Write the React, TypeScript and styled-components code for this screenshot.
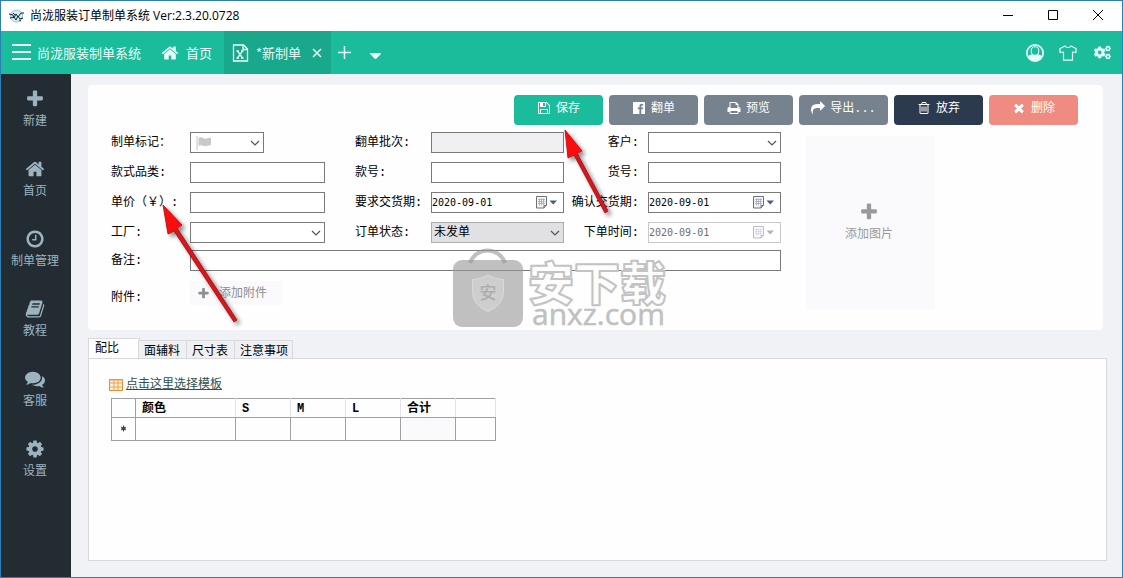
import React from "react";
import styled, { createGlobalStyle } from "styled-components";
import { FaCogs } from "react-icons/fa";

const Global = createGlobalStyle`
  *, *::before, *::after { box-sizing: border-box; }
  body {
    margin: 0;
    font: 12px/16px "Liberation Mono", "Noto Sans CJK SC", monospace;
    color: #000;
  }
  button, input, select { font: inherit; color: inherit; }
  button { cursor: pointer; }
`;

const PATHS = {
  plus: "M1600 736v192q0 40-28 68t-68 28h-416v416q0 40-28 68t-68 28h-192q-40 0-68-28t-28-68v-416h-416q-40 0-68-28t-28-68v-192q0-40 28-68t68-28h416v-416q0-40 28-68t68-28h192q40 0 68 28t28 68v416h416q40 0 68 28t28 68z",
  home: "M1472 992v480q0 26-19 45t-45 19h-384v-384h-256v384h-384q-26 0-45-19t-19-45v-480q0-1 .5-3t.5-3l575-474 575 474q1 2 1 6zm223-69l-62 74q-8 9-21 11h-3q-13 0-21-7l-692-577-692 577q-12 8-24 7-13-2-21-11l-62-74q-8-10-7-23.500t11-21.500l719-599q32-26 76-26t76 26l244 204v-195q0-14 9-23t23-9h192q14 0 23 9t9 23v408l219 182q10 8 11 21.500t-7 23.500z",
  clock: "M1024 544v448q0 14-9 23t-23 9h-320q-14 0-23-9t-9-23v-64q0-14 9-23t23-9h224v-352q0-14 9-23t23-9h64q14 0 23 9t9 23zm416 352q0-148-73-273t-198-198-273-73-273 73-198 198-73 273 73 273 198 198 273 73 273-73 198-198 73-273zm224 0q0 209-103 385.500t-279.500 279.500-385.500 103-385.500-103-279.500-279.500-103-385.500 103-385.500 279.500-279.500 385.500-103 385.500 103 279.500 279.500 103 385.500z",
  book: "M1703 478q40 57 18 129l-275 906q-19 64-76.500 107.500t-122.500 43.500h-923q-77 0-148.500-53.500t-99.500-131.500q-24-67-2-127 0-4 3-27t4-37q1-8-3-21.500t-3-19.500q2-11 8-21t16.500-23.500 16.500-23.500q23-38 45-91.500t30-91.500q3-10 .5-30t-.5-28q3-11 17-28t17-23q21-36 42-92t25-90q1-9-2.500-32t.5-28q4-13 22-30.500t22-22.500q19-26 42.500-84.500t27.500-96.500q1-8-3-25.500t-2-26.500q2-8 9-18t18-23 17-21q8-12 16.500-30.500t15-35 16-36 19.500-32 26.500-23.500 36-11.500 47.500 5.500l-1 3q38-9 51-9h761q74 0 114 56t18 130l-274 906q-36 119-71.500 153.500t-128.500 34.500h-869q-27 0-38 15-11 16-1 43 24 70 144 70h923q29 0 56-15.500t35-41.500l300-987q7-22 5-57 38 15 59 43zm-1064 2q-4 13 2 22.500t20 9.500h608q13 0 25.500-9.500t16.500-22.500l21-64q4-13-2-22.500t-20-9.500h-608q-13 0-25.500 9.500t-16.500 22.500zm-83 256q-4 13 2 22.500t20 9.500h608q13 0 25.500-9.500t16.500-22.500l21-64q4-13-2-22.500t-20-9.500h-608q-13 0-25.500 9.500t-16.500 22.500z",
  comments: "M1408 768q0 139-94 257t-256.500 186.500-353.500 68.500q-86 0-176-16-124 88-278 128-36 9-86 16h-3q-11 0-20.500-8t-11.500-21q-1-3-1-6.500t.5-6.500 2-6l2.500-5 3.500-5.500 4-5 4.500-5 4-4.500q5-6 23-25t26-29.500 22.500-29 25-38.500 20.500-44q-124-72-195-177t-71-224q0-139 94-257t256.500-186.500 353.500-68.500 353.500 68.500 256.500 186.500 94 257zm384 256q0 120-71 224.500t-195 176.500q10 24 20.500 44t25 38.500 22.500 29 26 29.500 23 25q1 1 4 4.500t4.500 5 4 5 3.500 5.500l2.500 5 2 6 .5 6.500-1 6.500q-3 14-13 22t-22 7q-50-7-86-16-154-40-278-128-90 16-176 16-271 0-472-132 58 4 88 4 161 0 309-45t264-129q125-92 192-212t67-254q0-77-23-152 129 71 204 178t75 230z",
  cog: "M1152 896q0-106-75-181t-181-75-181 75-75 181 75 181 181 75 181-75 75-181zm512-109v222q0 12-8 23t-20 13l-185 28q-19 54-39 91 35 50 107 138 10 12 10 25t-9 23q-27 37-99 108t-94 71q-12 0-26-9l-138-108q-44 23-91 38-16 136-29 186-7 28-36 28h-222q-14 0-24.500-8.500t-11.500-21.500l-28-184q-49-16-90-37l-141 107q-10 9-25 9-14 0-25-11-126-114-165-168-7-10-7-23 0-12 8-23 15-21 51-66.500t54-70.500q-27-50-41-99l-183-27q-13-2-21-12.500t-8-23.500v-222q0-12 8-23t19-13l186-28q14-46 39-92-40-57-107-138-10-12-10-24 0-10 9-23 26-36 98.500-107.500t94.500-71.500q13 0 26 10l138 107q44-23 91-38 16-136 29-186 7-28 36-28h222q14 0 24.500 8.500t11.500 21.500l28 184q49 16 90 37l142-107q9-9 24-9 13 0 25 10 129 119 165 170 7 8 7 22 0 12-8 23-15 21-51 66.500t-54 70.500q26 50 41 98l183 28q13 2 21 12.500t8 23.500z",
  save: "M512 1536h768v-384h-768v384zm896 0h128v-896q0-14-10-38.500t-20-34.500l-281-281q-10-10-34-20t-39-10v416q0 40-28 68t-68 28h-576q-40 0-68-28t-28-68v-416h-128v1280h128v-416q0-40 28-68t68-28h832q40 0 68 28t28 68v416zm-384-928v-320q0-13-9.500-22.500t-22.500-9.500h-192q-13 0-22.500 9.500t-9.500 22.500v320q0 13 9.500 22.500t22.500 9.500h192q13 0 22.500-9.500t9.500-22.500zm640 32v928q0 40-28 68t-68 28h-1344q-40 0-68-28t-28-68v-1344q0-40 28-68t68-28h928q40 0 88 20t76 48l280 280q28 28 48 76t20 88z",
  facebook: "M1579 128q35 0 60 25t25 60v1366q0 35-25 60t-60 25h-391v-595h199l30-232h-229v-148q0-56 23.500-84t91.500-28l122-1v-207q-63-9-178-9-136 0-217.500 80t-81.500 226v171h-200v232h200v595h-735q-35 0-60-25t-25-60v-1366q0-35 25-60t60-25h1366z",
  print: "M448 1536h896v-256h-896v256zm0-640h896v-384h-160q-40 0-68-28t-28-68v-160h-640v640zm1152 64q0-26-19-45t-45-19-45 19-19 45 19 45 45 19 45-19 19-45zm128 0v416q0 13-9.500 22.500t-22.500 9.500h-224v160q0 40-28 68t-68 28h-960q-40 0-68-28t-28-68v-160h-224q-13 0-22.500-9.500t-9.500-22.500v-416q0-79 56.500-135.500t135.500-56.500h64v-544q0-40 28-68t68-28h672q40 0 88 20t76 48l152 152q28 28 48 76t20 88v256h64q79 0 135.500 56.500t56.500 135.500z",
  share: "M1792 640q0 26-19 45l-512 512q-19 19-45 19t-45-19-19-45v-256h-224q-98 0-175.500 6t-154 21.500-133 42.500-105.500 69.500-80 101-48.500 138.500-17.500 181q0 55 5 123 0 6 2.500 23.500t2.500 26.500q0 15-8.500 25t-23.500 10q-16 0-28-17-7-9-13-22t-13.500-30-10.500-24q-127-285-127-451 0-199 53-333 162-403 875-403h224v-256q0-26 19-45t45-19 45 19l512 512q19 19 19 45z",
  trash: "M704 736v576q0 14-9 23t-23 9h-64q-14 0-23-9t-9-23v-576q0-14 9-23t23-9h64q14 0 23 9t9 23zm256 0v576q0 14-9 23t-23 9h-64q-14 0-23-9t-9-23v-576q0-14 9-23t23-9h64q14 0 23 9t9 23zm256 0v576q0 14-9 23t-23 9h-64q-14 0-23-9t-9-23v-576q0-14 9-23t23-9h64q14 0 23 9t9 23zm128 724v-948h-896v948q0 22 7 40.500t14.500 27 10.500 8.500h832q3 0 10.500-8.500t14.500-27 7-40.500zm-672-1076h448l-48-117q-7-9-17-11h-317q-10 2-17 11zm928 32v64q0 14-9 23t-23 9h-96v948q0 83-47 143.500t-113 60.500h-832q-66 0-113-58.500t-47-141.500v-952h-96q-14 0-23-9t-9-23v-64q0-14 9-23t23-9h309l70-167q15-37 54-63t79-26h320q40 0 79 26t54 63l70 167h309q14 0 23 9t9 23z",
  times: "M1490 1322q0 40-28 68l-136 136q-28 28-68 28t-68-28l-294-294-294 294q-28 28-68 28t-68-28l-136-136q-28-28-28-68t28-68l294-294-294-294q-28-28-28-68t28-68l136-136q28-28 68-28t68 28l294 294 294-294q28-28 68-28t68 28l136 136q28 28 28 68t-28 68l-294 294 294 294q28 28 28 68z",
};
type IconName = keyof typeof PATHS;

const Icon = ({ name, size }: { name: IconName; size: number }) => (
  <svg width={size} height={size} viewBox="0 0 1792 1792" fill="currentColor" aria-hidden="true">
    <path d={PATHS[name]} />
  </svg>
);

const Window = styled.div`
  position: relative;
  display: flex;
  flex-direction: column;
  min-height: 100vh;
  border: 1px solid #2b7fb8;
  background: #f0f2f6;
  overflow: hidden;
`;

const TitleBar = styled.header`
  display: flex;
  align-items: center;
  height: 30px;
  padding-left: 8px;
  background: #fff;
  font-family: "Open Sans", "Noto Sans CJK SC", sans-serif;
`;
const WindowTitle = styled.h1`
  flex: 1;
  margin: 0 0 0 6px;
  font-size: 12px;
  font-weight: 400;
`;
const CaptionButton = styled.button`
  display: grid;
  place-items: center;
  width: 45px;
  height: 30px;
  padding: 0 3px 2px 0;
  border: 0;
  background: none;
`;

const AppBar = styled.nav`
  display: flex;
  align-items: center;
  height: 43px;
  padding-left: 10px;
  background: #1abc9c;
  color: #e9fffa;
  font: 13px/18px "Noto Sans CJK SC", sans-serif;
`;
const BarButton = styled.button<{ $width?: number }>`
  display: flex;
  align-items: center;
  justify-content: center;
  width: ${(p) => (p.$width ? `${p.$width}px` : "auto")};
  height: 43px;
  padding: 0;
  border: 0;
  background: none;
`;
const Brand = styled.span`
  margin-left: 5px;
`;
const DocTab = styled.div<{ $active?: boolean }>`
  display: flex;
  align-items: center;
  gap: 8px;
  height: 43px;
  padding: ${(p) => (p.$active ? "0 6px 0 8px" : "0 12px 0 20px")};
  background: ${(p) => (p.$active ? "#1aa88c" : "transparent")};
`;
const TabLink = styled.a`
  display: flex;
  align-items: center;
  gap: 7px;
  color: inherit;
  text-decoration: none;
`;
const Tools = styled.div`
  display: flex;
  margin-left: auto;
  padding-right: 1px;
`;

const Body = styled.div`
  display: flex;
  flex: 1;
`;
const Sidebar = styled.nav`
  flex: none;
  width: 70px;
  padding-right: 2px;
  background: #232c33;
`;
const SideItem = styled.a`
  display: flex;
  flex-direction: column;
  align-items: center;
  justify-content: center;
  gap: 5px;
  height: 70px;
  color: #9db4c0;
  text-decoration: none;
`;

const Main = styled.main`
  display: flex;
  flex: 1;
  flex-direction: column;
  gap: 8px;
  min-width: 0;
  padding: 11px 15px 16px 17px;
`;
const OrderCard = styled.section`
  margin-right: 4px;
  padding: 10px 25px 21px 23px;
  border-radius: 4px;
  background: #fefefe;
`;
const Actions = styled.div`
  display: flex;
  justify-content: flex-end;
  gap: 6px;
`;
const ActionButton = styled.button<{ $color: string }>`
  display: flex;
  align-items: center;
  justify-content: center;
  gap: 5px;
  width: 89px;
  height: 30px;
  padding: 0 0 2px;
  border: 0;
  border-radius: 4px;
  background: ${(p) => p.$color};
  color: #fff;
  svg { margin-bottom: 2px; }
`;

const FormRow = styled.div`
  display: flex;
  align-items: flex-start;
  gap: 25px;
  padding-top: 7px;
`;
const Fields = styled.form`
  display: grid;
  grid-template-columns: 79px 135px 30px 76px 133px 84px 133px;
  grid-template-rows: repeat(3, 30px) 28px 31px 26px;
  align-items: start;
`;
const FieldLabel = styled.label<{ $end?: boolean; $low?: boolean; $col?: number }>`
  grid-column: ${(p) => p.$col ?? "auto"};
  align-self: ${(p) => (p.$low ? "end" : "start")};
  padding-right: ${(p) => (p.$end ? "9px" : "0")};
  line-height: ${(p) => (p.$low ? "18px" : "22px")};
  text-align: ${(p) => (p.$end ? "right" : "left")};
  white-space: nowrap;
`;
const TextBox = styled.input<{ $wide?: boolean }>`
  grid-column: ${(p) => (p.$wide ? "2 / -1" : "auto")};
  width: 100%;
  height: 21px;
  padding: 0 2px;
  border: 1px solid #7a7a7a;
  border-radius: 0;
  background: #fff;
  &:disabled { background: #f0eff1; }
`;
const Control = styled.div<{ $width?: number }>`
  position: relative;
  width: ${(p) => (p.$width ? `${p.$width}px` : "100%")};
`;
const SelectBox = styled.select<{ $grey?: boolean }>`
  display: block;
  width: 100%;
  height: 21px;
  padding: 1px 2px 0;
  border: 1px solid ${(p) => (p.$grey ? "#adadad" : "#7a7a7a")};
  border-radius: 0;
  background: ${(p) => (p.$grey ? "#e1e0e2" : "#fff")};
  line-height: 18px;
  appearance: none;
`;
const DateBox = styled.input`
  display: block;
  width: 100%;
  height: 21px;
  padding: 0 0 1px;
  border: 1px solid #7a7a7a;
  border-radius: 0;
  background: #fff;
  font: 10px/18px "DejaVu Sans Mono", monospace;
  &:disabled { border-color: #c8c8c8; color: #6d6d6d; }
`;
const EndMark = styled.span<{ $faded?: boolean }>`
  position: absolute;
  top: 0;
  right: 4px;
  display: flex;
  align-items: center;
  height: 21px;
  opacity: ${(p) => (p.$faded ? 0.45 : 1)};
  pointer-events: none;
`;
const DateMark = styled(EndMark)`
  right: 6px;
`;
const StartMark = styled(EndMark)`
  right: auto;
  left: 6px;
`;
const AttachButton = styled.button`
  display: flex;
  align-items: center;
  gap: 9px;
  width: 93px;
  height: 24px;
  padding: 2px 0 0 7px;
  border: 0;
  background: #faf9fc;
  color: #8f8f8f;
  svg { margin-bottom: 2px; }
`;
const PictureButton = styled.button`
  display: flex;
  flex-direction: column;
  align-items: center;
  justify-content: center;
  gap: 5px;
  width: 129px;
  height: 173px;
  margin-top: 4px;
  padding: 0 3px 1px 0;
  border: 0;
  background: #faf9fc;
  color: #999;
`;

const Details = styled.section`
  display: flex;
  flex: 1;
  flex-direction: column;
`;
const TabList = styled.div`
  display: flex;
  align-items: flex-end;
  height: 21px;
  margin-bottom: -1px;
`;
const DetailTab = styled.button<{ $active?: boolean }>`
  height: ${(p) => (p.$active ? "21px" : "19px")};
  padding: ${(p) => (p.$active ? "1px 20px 0 6px" : "3px 6px 0 5px")};
  margin-right: ${(p) => (p.$active ? "-2px" : "0")};
  border: 1px solid #d9d9dc;
  border-right-width: ${(p) => (p.$active ? "1px" : "0")};
  border-bottom-color: ${(p) => (p.$active ? "#fefefe" : "#d9d9dc")};
  background: ${(p) => (p.$active ? "#fefefe" : "#f0eff2")};
  line-height: 16px;
  &:last-child { border-right-width: 1px; padding-right: 4px; }
`;
const DetailPane = styled.div`
  flex: 1;
  padding: 18px 20px;
  border: 1px solid #d9d9dc;
  background: #fefefe;
`;
const TemplateLink = styled.a`
  display: inline-flex;
  align-items: center;
  gap: 3px;
  color: #2f4f4f;
`;
const SizeTable = styled.table`
  width: 385px;
  margin: 2px 0 0 2px;
  border-collapse: collapse;
  table-layout: fixed;
  th, td { padding: 0 6px; border: 1px solid #a0a0a0; }
  th {
    height: 19px;
    padding-top: 1px;
    border-right-color: #e2e2e2;
    border-left-color: #e2e2e2;
    text-align: left;
    line-height: 16px;
  }
  td { height: 23px; }
  th:first-child, td:first-child { border-left-color: #a0a0a0; }
  th:first-child { border-right-color: #a0a0a0; }
  td:first-child { padding: 0; text-align: center; }
  td:nth-child(6) { background: #faf9fc; }
`;
const Col = styled.col<{ $width: number }>`
  width: ${(p) => p.$width}px;
`;

const Watermark = styled.svg`
  position: absolute;
  top: 245px;
  left: 451px;
  color: rgba(150, 150, 150, 0.6);
  pointer-events: none;
`;
const Arrow = styled.svg<{ $left: number; $top: number }>`
  position: absolute;
  top: ${(p) => p.$top}px;
  left: ${(p) => p.$left}px;
  filter: drop-shadow(3px 3px 2px rgba(0, 0, 0, 0.45));
  pointer-events: none;
`;

const Chevron = () => (
  <svg width="10" height="6" viewBox="0 0 10 6" fill="none" stroke="#555" strokeWidth="1.2" aria-hidden="true">
    <path d="M1 1l4 4 4-4" />
  </svg>
);
const CalendarMark = () => (
  <svg width="22" height="13" viewBox="0 0 22 13" aria-hidden="true">
    <path d="M.5 .5h10v8.500l-2.500 3H.5z" fill="#f4f5f8" stroke="#707070" />
    <path d="M2 3.500h7M2 5.500h7M2 7.500h7M3.500 2.500v7M5.500 2.500v7M7.500 2.500v7" stroke="#9aa3b3" strokeWidth=".7" />
    <path d="M8 12V9.500h2.500" fill="none" stroke="#707070" />
    <path d="M13.500 4.500h7.500L17.200 8.500z" fill="#44617f" />
  </svg>
);

const DateField = ({ id, disabled }: { id: string; disabled?: boolean }) => (
  <Control>
    <DateBox id={id} type="text" defaultValue="2020-09-01" disabled={disabled} />
    <DateMark $faded={disabled}><CalendarMark /></DateMark>
  </Control>
);

const sideItems: { icon: IconName; label: string }[] = [
  { icon: "plus", label: "新建" },
  { icon: "home", label: "首页" },
  { icon: "clock", label: "制单管理" },
  { icon: "book", label: "教程" },
  { icon: "comments", label: "客服" },
  { icon: "cog", label: "设置" },
];
const actions: { icon: IconName; label: string; color: string }[] = [
  { icon: "save", label: "保存", color: "#1abc9c" },
  { icon: "facebook", label: "翻单", color: "#76838f" },
  { icon: "print", label: "预览", color: "#76838f" },
  { icon: "share", label: "导出...", color: "#76838f" },
  { icon: "trash", label: "放弃", color: "#2c3a50" },
  { icon: "times", label: "删除", color: "#ef8b80" },
];
const columns = [
  { title: "", width: 24 },
  { title: "颜色", width: 100 },
  { title: "S", width: 55 },
  { title: "M", width: 55 },
  { title: "L", width: 55 },
  { title: "合计", width: 55 },
  { title: "", width: 40 },
];

export default function App() {
  return (
    <Window>
      <Global />
      <TitleBar>
        <svg width="15" height="15" viewBox="0 0 15 15" aria-hidden="true">
          <circle cx="7.500" cy="7" r="6" fill="#d5eef5" stroke="#8fc6d8" />
          <path d="M0 5l4 1 1 3 2-4 2 3 3-4 3 0M1 9l4-1 2 3 2-4 2 3 3-1M4 4l2 2M10 11l2 1" fill="none" stroke="#17222c" strokeWidth="1" />
        </svg>
        <WindowTitle>尚泷服装订单制单系统 Ver:2.3.20.0728</WindowTitle>
        <CaptionButton aria-label="最小化">
          <svg width="10" height="10" stroke="#000"><path d="M0 5.500h10" /></svg>
        </CaptionButton>
        <CaptionButton aria-label="最大化">
          <svg width="10" height="10" fill="none" stroke="#000"><path d="M.5 .5h9v9h-9z" /></svg>
        </CaptionButton>
        <CaptionButton aria-label="关闭">
          <svg width="10" height="10" stroke="#000"><path d="M0 0l10 10M10 0L0 10" /></svg>
        </CaptionButton>
      </TitleBar>

      <AppBar>
        <BarButton aria-label="菜单">
          <svg width="21" height="18" stroke="currentColor" strokeWidth="2"><path d="M1 1h19M1 8h19M1 15h19" /></svg>
        </BarButton>
        <Brand>尚泷服装制单系统</Brand>
        <DocTab>
          <TabLink href="#home"><Icon name="home" size={18} />首页</TabLink>
        </DocTab>
        <DocTab $active>
          <TabLink href="#order">
            <svg width="17" height="18" viewBox="0 0 17 18" fill="none" stroke="currentColor" strokeWidth="1.300" aria-hidden="true">
              <path d="M1.500 1h10l4 4v12h-14zM11 1v4.500h4.500" />
              <path d="M5.500 7l5 7M10.500 7l-5 7M4.500 7h2.500M9 7h2.500M4.500 14h2.500M9 14h2.500" />
            </svg>
            *新制单
          </TabLink>
          <BarButton $width={16} aria-label="关闭标签">
            <svg width="10" height="10" stroke="currentColor" strokeWidth="1.500"><path d="M1 1l8 8M9 1L1 9" /></svg>
          </BarButton>
        </DocTab>
        <BarButton $width={26} aria-label="新标签">
          <svg width="13" height="13" stroke="currentColor" strokeWidth="1.500"><path d="M0 6.500h13M6.500 0v13" /></svg>
        </BarButton>
        <BarButton $width={36} aria-label="标签列表">
          <svg width="11" height="12" fill="currentColor"><path d="M0 6h11v1l-5 5h-1L0 7z" /></svg>
        </BarButton>
        <Tools>
          <BarButton $width={33} aria-label="用户">
            <svg width="18" height="18" viewBox="0 0 18 18" aria-hidden="true">
              <circle cx="9" cy="9" r="9" fill="currentColor" />
              <path d="M9 1.800a7.200 7.200 0 0 0-6.600 10.100c1-1 2.600-1.300 3.900-1.700C4.200 7.400 5.200 3 9 3s4.800 4.400 2.700 7.200c1.300.4 2.900.7 3.900 1.700A7.200 7.200 0 0 0 9 1.800z" fill="#1abc9c" />
              <ellipse cx="9" cy="7" rx="3.800" ry="4.200" fill="#1abc9c" stroke="currentColor" strokeWidth="1" />
            </svg>
          </BarButton>
          <BarButton $width={33} aria-label="皮肤">
            <svg width="18" height="16" viewBox="0 0 18 16" fill="none" stroke="currentColor" strokeWidth="1.200" strokeLinejoin="round" aria-hidden="true">
              <path d="M6 1L1 3.500v4l3.500-.5v8.200h9V7l3.500.5v-4L12 1c-1 2-5 2-6 0z" />
            </svg>
          </BarButton>
          <BarButton $width={37} aria-label="系统设置"><FaCogs size={17} /></BarButton>
        </Tools>
      </AppBar>

      <Body>
        <Sidebar>
          {sideItems.map((item) => (
            <SideItem key={item.label} href="#">
              <Icon name={item.icon} size={20} />
              {item.label}
            </SideItem>
          ))}
        </Sidebar>

        <Main>
          <OrderCard>
            <Actions>
              {actions.map((a) => (
                <ActionButton key={a.label} $color={a.color}>
                  <Icon name={a.icon} size={14} />
                  {a.label}
                </ActionButton>
              ))}
            </Actions>
            <FormRow>
              <Fields>
                <FieldLabel htmlFor="flag">制单标记：</FieldLabel>
                <Control $width={74}>
                  <SelectBox id="flag"><option></option></SelectBox>
                  <StartMark>
                    <svg width="16" height="14" viewBox="0 0 16 14" aria-hidden="true">
                      <path d="M1 0v14" stroke="#c4c4c4" />
                      <path d="M2.500 2c3-2 5 1.500 8 .5 2-.8 3-.8 4.500-.5v7.500c-2-.5-3 .2-4.500.6-3 .8-5-2-8 0z" fill="#c9c9c9" />
                    </svg>
                  </StartMark>
                  <EndMark><Chevron /></EndMark>
                </Control>
                <FieldLabel htmlFor="batch" $col={4}>翻单批次:</FieldLabel>
                <TextBox id="batch" disabled />
                <FieldLabel htmlFor="client" $end>客户:</FieldLabel>
                <Control>
                  <SelectBox id="client"><option></option></SelectBox>
                  <EndMark><Chevron /></EndMark>
                </Control>

                <FieldLabel htmlFor="category">款式品类:</FieldLabel>
                <TextBox id="category" />
                <FieldLabel htmlFor="style" $col={4}>款号:</FieldLabel>
                <TextBox id="style" />
                <FieldLabel htmlFor="goods" $end>货号:</FieldLabel>
                <TextBox id="goods" />

                <FieldLabel htmlFor="price">单价（￥）:</FieldLabel>
                <TextBox id="price" />
                <FieldLabel htmlFor="due" $col={4}>要求交货期:</FieldLabel>
                <DateField id="due" />
                <FieldLabel htmlFor="confirmed" $end>确认交货期:</FieldLabel>
                <DateField id="confirmed" />

                <FieldLabel htmlFor="factory">工厂:</FieldLabel>
                <Control>
                  <SelectBox id="factory"><option></option></SelectBox>
                  <EndMark><Chevron /></EndMark>
                </Control>
                <FieldLabel htmlFor="status" $col={4}>订单状态:</FieldLabel>
                <Control>
                  <SelectBox id="status" $grey><option>未发单</option></SelectBox>
                  <EndMark><Chevron /></EndMark>
                </Control>
                <FieldLabel htmlFor="placed" $end>下单时间:</FieldLabel>
                <DateField id="placed" disabled />

                <FieldLabel htmlFor="remark">备注:</FieldLabel>
                <TextBox id="remark" $wide />

                <FieldLabel htmlFor="attach" $low>附件:</FieldLabel>
                <AttachButton id="attach" type="button"><Icon name="plus" size={13} />添加附件</AttachButton>
              </Fields>
              <PictureButton type="button"><Icon name="plus" size={20} />添加图片</PictureButton>
            </FormRow>
          </OrderCard>

          <Details>
            <TabList role="tablist">
              <DetailTab role="tab" aria-selected="true" $active>配比</DetailTab>
              <DetailTab role="tab">面辅料</DetailTab>
              <DetailTab role="tab">尺寸表</DetailTab>
              <DetailTab role="tab">注意事项</DetailTab>
            </TabList>
            <DetailPane>
              <TemplateLink href="#template">
                <svg width="14" height="12" viewBox="0 0 14 12" aria-hidden="true">
                  <path d="M.5 .5h13v11H.5z" fill="#fdf3df" stroke="#e8862a" />
                  <path d="M0 1h14M0 4h14M0 8h14M5 0v12M9 0v12" stroke="#eda04e" />
                </svg>
                点击这里选择模板
              </TemplateLink>
              <SizeTable>
                <colgroup>{columns.map((c, i) => <Col key={i} $width={c.width} />)}</colgroup>
                <thead>
                  <tr>{columns.map((c, i) => <th key={i}>{c.title}</th>)}</tr>
                </thead>
                <tbody>
                  <tr>
                    {columns.map((_, i) => (
                      <td key={i}>
                        {i === 0 && (
                          <svg width="7" height="7" viewBox="0 0 7 7" stroke="#444" aria-hidden="true">
                            <circle cx="3.500" cy="3.500" r="1.500" fill="#444" />
                            <path d="M3.500 .5v6M1 2l5 3M6 2L1 5" />
                          </svg>
                        )}
                      </td>
                    ))}
                  </tr>
                </tbody>
              </SizeTable>
            </DetailPane>
          </Details>
        </Main>
      </Body>

      <Watermark width="220" height="96" viewBox="0 0 220 96" aria-hidden="true">
        <path d="M18 17a18.500 18.500 0 0 1 35 0" fill="none" stroke="currentColor" strokeWidth="4" />
        <rect x="1" y="14" width="70" height="67" rx="9" fill="currentColor" />
        <path d="M36 29q8 4.500 15.500 4.500v13q0 12-15.500 19-15.500-7-15.500-19v-13q7.500 0 15.500-4.500z" fill="#cecece" stroke="#dadada" />
        <text x="36" y="53" textAnchor="middle" fontSize="17" fontWeight="500" fontFamily="Noto Sans CJK SC, sans-serif" fill="#adadad">安</text>
        <text x="76" y="54" fontSize="46" fontWeight="900" fontFamily="Noto Sans CJK SC, sans-serif" fill="#fdfdfd" stroke="#c3c3c3" strokeWidth="2" strokeLinejoin="round">安下载</text>
        <text x="80" y="79" fontSize="30" fontFamily="Open Sans, sans-serif" fill="#c0c0c0" stroke="#c0c0c0" strokeWidth=".5">anxz.com</text>
      </Watermark>
      <Arrow $left={161} $top={203} width="78" height="120" viewBox="0 0 78 120" aria-hidden="true">
        <path d="M1 1l19 20-5 3 60 92-3 2-60-91-6 3z" fill="#d8171c" stroke="#9c0d10" strokeWidth=".8" />
        <path d="M1 1l19 20-13 9z" fill="#fb0d0d" />
      </Arrow>
      <Arrow $left={563} $top={128} width="46" height="86" viewBox="0 0 46 86" aria-hidden="true">
        <path d="M1 1l17 21-5 2 31 58-3 2-31-58-6 3z" fill="#d8171c" stroke="#9c0d10" strokeWidth=".8" />
        <path d="M1 1l17 21-14 7z" fill="#fb0d0d" />
      </Arrow>
    </Window>
  );
}
